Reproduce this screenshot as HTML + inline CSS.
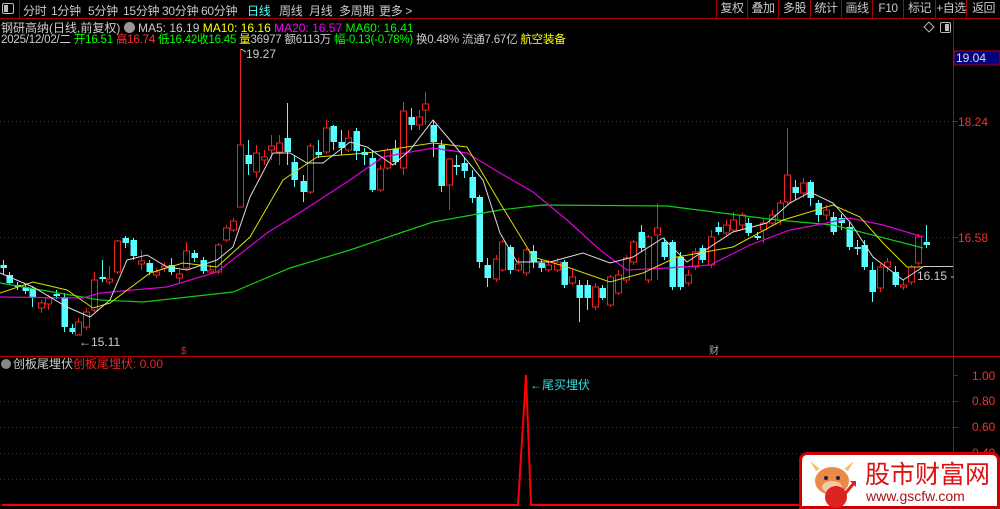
<!DOCTYPE html>
<html><head><meta charset="utf-8"><style>
*{margin:0;padding:0;box-sizing:border-box}
body{width:1000px;height:509px;background:#000;overflow:hidden;position:relative;font-family:"Liberation Sans","Noto Sans CJK SC",sans-serif;font-size:12px;color:#c0c0c0}
.a{position:absolute;white-space:nowrap}
#top{position:absolute;left:0;top:0;width:1000px;height:19px;border-bottom:1px solid #a00}
#top span{position:absolute;top:2px;font-size:12px;color:#c8c8c8;letter-spacing:-0.3px}
.tb{position:absolute;top:0;height:18px;border-left:1px solid #a00;color:#c8c8c8;font-size:12px;text-align:center;line-height:17px;letter-spacing:-0.5px;overflow:hidden}
</style></head><body>
<div id="top">
<div class="a" style="left:2px;top:3px;width:12px;height:11px;border:1px solid #bbb;border-radius:2px"><div style="position:absolute;left:1px;top:1px;width:4px;height:7px;background:#bbb"></div></div>
<div class="a" style="left:19px;top:0;width:1px;height:18px;background:#a00"></div>
<span style="left:23px">分时</span><span style="left:51px">1分钟</span><span style="left:88px">5分钟</span><span style="left:123px">15分钟</span><span style="left:162px">30分钟</span><span style="left:201px">60分钟</span><span style="left:247px;color:#5ff">日线</span><span style="left:279px">周线</span><span style="left:309px">月线</span><span style="left:339px">多周期</span><span style="left:379px">更多 &gt;</span>
<div class="tb" style="left:716px;width:31px">复权</div><div class="tb" style="left:747px;width:31px">叠加</div><div class="tb" style="left:778px;width:32px">多股</div><div class="tb" style="left:810px;width:31px">统计</div><div class="tb" style="left:841px;width:31px">画线</div><div class="tb" style="left:872px;width:31px">F10</div><div class="tb" style="left:903px;width:32px">标记</div><div class="tb" style="left:935px;width:31px">+自选</div><div class="tb" style="left:966px;width:34px">返回</div>
</div>
<div class="a" style="left:1px;top:19px;font-size:12px;color:#ccc">钢研高纳(日线,前复权) <span style="display:inline-block;width:11px;height:11px;border-radius:6px;background:#999;vertical-align:-1px"></span> MA5: 16.19 <span style="color:#ff0">MA10: 16.16</span> <span style="color:#f0f">MA20: 16.57</span> <span style="color:#0f0">MA60: 16.41</span></div>
<div class="a" style="left:1px;top:31px;font-size:11.5px;color:#ccc;letter-spacing:-0.2px">2025/12/02/二 <span style="color:#0f0">开16.51</span> <span style="color:#f33">高16.74</span> <span style="color:#0f0">低16.42</span><span style="color:#0f0">收16.45</span> <span style="color:#ff0">量</span>36977 额6113万 <span style="color:#0f0">幅-0.13(-0.78%)</span> 换0.48% 流通7.67亿 <span style="color:#ff0">航空装备</span></div>
<div class="a" style="left:925px;top:23px;width:8px;height:8px;border:1px solid #bbb;transform:rotate(45deg)"></div>
<div class="a" style="left:940px;top:22px;width:11px;height:11px;border:1px solid #bbb;border-radius:2px"><div style="position:absolute;right:1px;top:1px;width:4px;height:7px;background:#bbb"></div></div>
<svg class="a" style="left:0;top:0" width="1000" height="509" id="s">
<line x1="953.5" y1="19" x2="953.5" y2="509" stroke="#b00"/>
<line x1="0" y1="121.5" x2="953" y2="121.5" stroke="#a00" stroke-dasharray="1,3"/>
<line x1="0" y1="237.5" x2="953" y2="237.5" stroke="#a00" stroke-dasharray="1,3"/>
<line x1="0" y1="356.5" x2="1000" y2="356.5" stroke="#b00"/>
<line x1="0" y1="401.5" x2="953" y2="401.5" stroke="#a00" stroke-dasharray="1,3"/>
<line x1="0" y1="427.5" x2="953" y2="427.5" stroke="#a00" stroke-dasharray="1,3"/>
<line x1="0" y1="453.5" x2="953" y2="453.5" stroke="#a00" stroke-dasharray="1,3"/>
<line x1="0" y1="479.5" x2="953" y2="479.5" stroke="#a00" stroke-dasharray="1,3"/>
<line x1="953" y1="375.5" x2="958" y2="375.5" stroke="#b00"/><line x1="953" y1="401.5" x2="958" y2="401.5" stroke="#b00"/><line x1="953" y1="427.5" x2="958" y2="427.5" stroke="#b00"/><line x1="953" y1="453.5" x2="958" y2="453.5" stroke="#b00"/>
<line x1="953" y1="121.5" x2="958" y2="121.5" stroke="#b00"/><line x1="953" y1="237.5" x2="958" y2="237.5" stroke="#b00"/>
<rect x="954" y="51" width="46" height="14" fill="#000080" stroke="#b00"/>
<text x="956" y="62" fill="#ddd" font-size="12">19.04</text>
<text x="958" y="126" fill="#e33" font-size="12">18.24</text>
<text x="958" y="242" fill="#e33" font-size="12">16.58</text>
<text x="972" y="380" fill="#e33" font-size="12">1.00</text>
<text x="972" y="405" fill="#e33" font-size="12">0.80</text>
<text x="972" y="431" fill="#e33" font-size="12">0.60</text>
<text x="972" y="457" fill="#e33" font-size="12">0.40</text>
<g id="c"></g>
<polyline fill="none" stroke="#1c1" stroke-width="1.2" points="0,283 100,300 143,302 233,292 290,268 350,250 400,233 433,222 500,210 543,205 667,206 777,220 833,225 853,230 923,248"/>
<polyline fill="none" stroke="#d0d" stroke-width="1.2" points="0,297 83,298 100,293 167,287 217,272 267,233 307,208 350,180 383,157 433,148 467,153 500,173 533,192 567,220 600,250 627,270 667,268 710,265 750,245 790,230 817,225 850,218 883,225 923,237"/>
<polyline fill="none" stroke="#dd0" stroke-width="1" points="0,293 33,282 67,290 93,308 110,303 150,273 183,263 217,267 250,237 283,180 317,157 367,153 433,143 467,147 500,203 533,257 567,267 610,282 643,273 677,257 733,247 783,220 833,205 860,217 883,243 907,267 923,267"/>
<polyline fill="none" stroke="#ddd" stroke-width="1" points="0,273 33,287 67,307 90,317 110,300 127,260 147,255 167,267 187,270 217,260 233,247 250,197 273,153 290,153 307,163 323,163 350,142 367,147 393,165 410,150 433,120 450,140 483,180 500,233 517,262 550,262 583,253 610,263 633,257 663,238 687,262 733,232 767,223 790,203 810,192 833,203 850,222 873,257 903,280 923,267"/>
<line x1="923" y1="266.5" x2="953" y2="266.5" stroke="#ccc"/>
<text x="917" y="280" fill="#ccc" font-size="12">16.15 -</text>
<polyline fill="none" stroke="#ccc" points="241,49 246,52"/><text x="246" y="58" fill="#ccc" font-size="12">19.27</text>
<text x="79" y="346" fill="#ccc" font-size="12">←15.11</text>
<text x="181" y="354" fill="#e22" font-size="10">$</text>
<text x="709" y="354" fill="#9ab" font-size="10">财</text>
<polyline fill="none" stroke="#f00" stroke-width="2" points="2,505 518,505 526,375 531,505 953,505"/>
<text x="530" y="389" fill="#3dd" font-size="12">←尾买埋伏</text>
<circle cx="6" cy="364" r="5" fill="#888"/>
<text x="13" y="368" fill="#ccc" font-size="12">创板尾埋伏</text>
<text x="73" y="368" fill="#e22" font-size="12">创板尾埋伏: 0.00</text>
</svg>
<div class="a" style="left:799px;top:452px;width:201px;height:57px;background:#fff;border:3px solid #c00;border-radius:8px 8px 0 0">
<svg class="a" style="left:4px;top:2px" width="58" height="52"><ellipse cx="26" cy="24" rx="17" ry="14" fill="#e9894a"/><path d="M10 14 L4 4 L14 12Z M42 14 L48 4 L38 12Z" fill="#f2c060"/><ellipse cx="26" cy="30" rx="10" ry="6" fill="#f5c8a8"/><circle cx="20" cy="21" r="2" fill="#222"/><circle cx="32" cy="21" r="2" fill="#222"/><circle cx="30" cy="40" r="11" fill="#d22"/><path d="M26 42 L34 34 L38 38 L48 26" stroke="#d22" stroke-width="3" fill="none"/><path d="M44 24 L50 24 L50 30Z" fill="#d22"/></svg>
<div class="a" style="left:63px;top:4px;font-size:25px;color:#d11;font-family:'Noto Sans CJK SC',sans-serif;line-height:28px">股市财富网</div>
<div class="a" style="left:64px;top:33px;font-size:14px;color:#a11;line-height:17px">www.gscfw.com</div>
</div>
<script>
var d=[[3,265,268,260,275,'c'],[9,275,283,272,285,'c'],[17,285,287,282,290,'c'],[25,287,291,285,294,'c'],[32,288,298,286,307,'c'],[41,303,308,300,313,'r'],[48,298,304,295,310,'r'],[56,294,296,290,299,'c'],[64,297,327,293,332,'c'],[72,328,332,324,334,'c'],[78,322,335,318,335,'r'],[86,312,327,308,330,'r'],[94,280,310,272,312,'r'],[102,277,279,260,282,'c'],[109,279,282,266,285,'r'],[117,241,272,240,274,'r'],[125,238,243,236,248,'c'],[133,240,256,238,260,'c'],[141,261,264,250,270,'r'],[149,263,272,260,275,'c'],[156,272,275,268,278,'r'],[164,266,268,262,272,'r'],[171,265,272,258,275,'c'],[179,274,278,270,283,'r'],[186,251,268,242,270,'r'],[194,253,258,250,262,'c'],[203,260,271,257,274,'c'],[210,270,272,265,274,'r'],[218,245,272,243,274,'r'],[226,228,240,225,242,'r'],[233,221,230,218,232,'r'],[240,145,207,49,207,'r'],[248,155,164,140,175,'c'],[256,153,172,145,178,'r'],[264,157,160,150,165,'r'],[271,146,150,135,160,'r'],[279,143,152,135,165,'r'],[287,138,152,103,165,'c'],[294,162,180,155,187,'c'],[303,181,192,175,202,'c'],[310,146,192,143,194,'r'],[318,152,155,140,158,'c'],[326,128,152,120,154,'r'],[333,126,142,125,150,'c'],[341,142,148,130,155,'c'],[348,138,150,130,152,'r'],[356,131,151,128,160,'c'],[364,152,155,148,165,'c'],[372,158,190,150,192,'c'],[380,169,190,165,192,'r'],[387,150,168,148,170,'r'],[395,149,162,140,165,'c'],[403,111,168,102,175,'r'],[411,117,125,108,130,'c'],[419,117,125,110,130,'r'],[425,104,110,92,125,'r'],[433,125,142,120,157,'c'],[441,145,186,140,192,'c'],[449,159,185,158,210,'r'],[456,165,166,155,175,'c'],[464,163,171,158,178,'c'],[472,177,198,170,203,'c'],[479,197,262,195,268,'c'],[487,265,278,258,287,'c'],[496,259,279,255,282,'r'],[502,242,270,240,272,'r'],[510,247,270,245,274,'c'],[518,264,270,258,272,'r'],[526,250,273,248,276,'r'],[533,251,262,245,268,'c'],[541,263,268,260,272,'c'],[548,265,270,260,272,'r'],[557,262,270,258,272,'r'],[564,262,285,260,288,'c'],[572,277,283,270,285,'r'],[579,285,298,280,322,'c'],[587,285,298,280,310,'c'],[595,287,307,283,310,'r'],[602,288,298,285,300,'c'],[610,277,305,275,307,'r'],[618,275,293,270,295,'r'],[626,258,280,255,283,'r'],[633,242,262,240,265,'r'],[641,232,248,225,252,'c'],[648,237,280,235,283,'r'],[657,228,235,203,280,'r'],[664,242,257,238,260,'c'],[672,242,287,240,290,'c'],[680,257,287,252,290,'c'],[688,275,283,270,286,'r'],[695,252,267,248,270,'r'],[702,248,260,245,263,'c'],[711,237,265,230,268,'r'],[718,227,232,222,235,'c'],[726,225,233,220,236,'r'],[733,220,230,212,232,'r'],[742,215,225,212,230,'r'],[748,223,233,218,236,'c'],[757,236,238,232,240,'c'],[763,223,230,218,243,'r'],[772,215,223,210,226,'r'],[780,203,220,200,225,'r'],[787,175,202,128,205,'r'],[795,187,193,180,200,'c'],[803,183,193,178,198,'r'],[810,182,198,180,206,'c'],[818,203,215,200,222,'c'],[826,210,215,205,220,'r'],[833,217,232,212,235,'c'],[841,218,223,214,230,'c'],[849,227,247,222,250,'c'],[857,247,249,240,255,'c'],[864,245,267,240,270,'c'],[872,270,292,262,302,'c'],[880,267,288,264,292,'r'],[887,262,267,258,272,'r'],[895,272,285,266,287,'c'],[903,285,287,280,290,'r'],[911,267,282,265,285,'r'],[918,237,263,234,265,'r'],[926,242,245,225,248,'c']];
var s='';d.forEach(function(c){var x=c[0],col=c[5]=='r'?'#e22':'#5ff',t=Math.min(c[1],c[2]),h=Math.max(2,Math.abs(c[2]-c[1]));s+='<line x1="'+(x+0.5)+'" y1="'+c[3]+'" x2="'+(x+0.5)+'" y2="'+c[4]+'" stroke="'+col+'"/>';if(c[5]=='r')s+='<rect x="'+(x-2.5)+'" y="'+t+'" width="6" height="'+h+'" fill="#000" stroke="'+col+'"/>';else s+='<rect x="'+(x-2.5)+'" y="'+t+'" width="6.5" height="'+h+'" fill="'+col+'"/>';});
document.getElementById('c').innerHTML=s;
</script>
</body></html>
